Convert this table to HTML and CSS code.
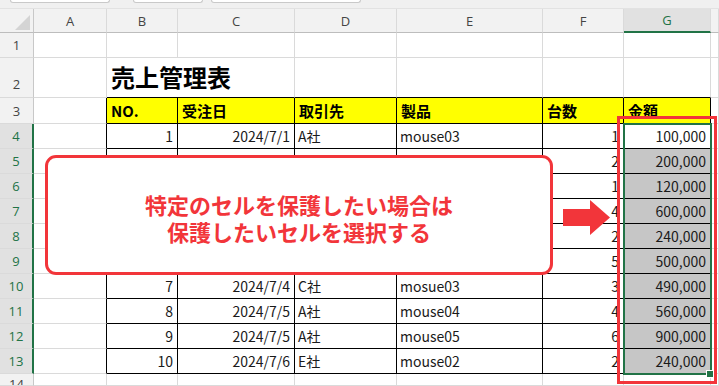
FILE: index.html
```html
<!DOCTYPE html>
<html lang="ja">
<head>
<meta charset="utf-8">
<title>売上管理表</title>
<link rel="stylesheet" href="styles.css">
</head>
<body>
<div class="sheet">
  <div class="strip"><span class="tb tb1"></span><span class="tb tb2"></span><span class="tb tb3"></span></div>
  <div class="row hdr">
    <div class="corner"><span class="tri"></span></div>
    <div class="ch">A</div><div class="ch">B</div><div class="ch">C</div><div class="ch">D</div><div class="ch">E</div><div class="ch">F</div><div class="ch sel">G</div><div class="ch"></div>
  </div>
  <div class="row">
    <div class="rh">1</div><div class="c"></div><div class="c"></div><div class="c"></div><div class="c"></div><div class="c"></div><div class="c"></div><div class="c"></div><div class="c"></div>
  </div>
  <div class="row r2">
    <div class="rh">2</div><div class="c"></div><div class="c tt title">売上管理表</div><div class="c tt"></div><div class="c tt"></div><div class="c tt"></div><div class="c tt"></div><div class="c tt"></div><div class="c"></div>
  </div>
  <div class="row r3">
    <div class="rh">3</div><div class="c tl"></div><div class="c t hd">NO.</div><div class="c t hd">受注日</div><div class="c t hd">取引先</div><div class="c t hd">製品</div><div class="c t hd">台数</div><div class="c t hd">金額</div><div class="c"></div>
  </div>
  <div class="row">
    <div class="rh sel">4</div><div class="c tl"></div><div class="c t num">1</div><div class="c t num">2024/7/1</div><div class="c t txt">A社</div><div class="c t txt">mouse03</div><div class="c t num">1</div><div class="c t num">100,000</div><div class="c"></div>
  </div>
  <div class="row">
    <div class="rh sel">5</div><div class="c tl"></div><div class="c t num">2</div><div class="c t num">2024/7/1</div><div class="c t txt">E社</div><div class="c t txt">mouse01</div><div class="c t num">2</div><div class="c t num s">200,000</div><div class="c"></div>
  </div>
  <div class="row">
    <div class="rh sel">6</div><div class="c tl"></div><div class="c t"></div><div class="c t"></div><div class="c t"></div><div class="c t"></div><div class="c t num">1</div><div class="c t num s">120,000</div><div class="c"></div>
  </div>
  <div class="row">
    <div class="rh sel">7</div><div class="c tl"></div><div class="c t"></div><div class="c t"></div><div class="c t"></div><div class="c t"></div><div class="c t num">4</div><div class="c t num s">600,000</div><div class="c"></div>
  </div>
  <div class="row">
    <div class="rh sel">8</div><div class="c tl"></div><div class="c t"></div><div class="c t"></div><div class="c t"></div><div class="c t"></div><div class="c t num">2</div><div class="c t num s">240,000</div><div class="c"></div>
  </div>
  <div class="row">
    <div class="rh sel">9</div><div class="c tl"></div><div class="c t"></div><div class="c t"></div><div class="c t"></div><div class="c t"></div><div class="c t num">5</div><div class="c t num s">500,000</div><div class="c"></div>
  </div>
  <div class="row">
    <div class="rh sel">10</div><div class="c tl"></div><div class="c t num">7</div><div class="c t num">2024/7/4</div><div class="c t txt">C社</div><div class="c t txt">mosue03</div><div class="c t num">3</div><div class="c t num s">490,000</div><div class="c"></div>
  </div>
  <div class="row">
    <div class="rh sel">11</div><div class="c tl"></div><div class="c t num">8</div><div class="c t num">2024/7/5</div><div class="c t txt">A社</div><div class="c t txt">mouse04</div><div class="c t num">4</div><div class="c t num s">560,000</div><div class="c"></div>
  </div>
  <div class="row">
    <div class="rh sel">12</div><div class="c tl"></div><div class="c t num">9</div><div class="c t num">2024/7/5</div><div class="c t txt">A社</div><div class="c t txt">mouse05</div><div class="c t num">6</div><div class="c t num s">900,000</div><div class="c"></div>
  </div>
  <div class="row">
    <div class="rh sel">13</div><div class="c tl"></div><div class="c t num">10</div><div class="c t num">2024/7/6</div><div class="c t txt">E社</div><div class="c t txt">mouse02</div><div class="c t num">2</div><div class="c t num s">240,000</div><div class="c"></div>
  </div>
  <div class="row r14">
    <div class="rh r14h">14</div><div class="c"></div><div class="c"></div><div class="c"></div><div class="c"></div><div class="c"></div><div class="c"></div><div class="c"></div><div class="c"></div>
  </div>

  <div class="selbox"></div>
  <div class="handle"></div>
  <div class="redbox"></div>
  <div class="callout">
    <p>特定のセルを保護したい場合は</p>
    <p>保護したいセルを選択する</p>
  </div>
  <svg class="arrow" width="48" height="36" viewBox="0 0 48 36"><polygon points="0,9 27,9 27,0 47,17.5 27,35 27,26 0,26" fill="#f2353a"/></svg>
</div>
</body>
</html>
```

FILE: styles.css
```css
* { box-sizing: border-box; }
html, body { margin: 0; padding: 0; background: #fff; }
body {
  font-family: "Noto Sans CJK JP", sans-serif;
  color: #1a1a1a;
  width: 719px;
  height: 386px;
  overflow: hidden;
}
.sheet { position: relative; width: 719px; height: 386px; overflow: hidden; }

.strip {
  height: 9px;
  background: #f0f0f0;
  display: flex;
  align-items: flex-start;
  padding-left: 10px;
  border-bottom: 1px solid #e2e2e2;
}
.tb {
  display: block;
  height: 3px;
  background: #fff;
  border: 1px solid #c9c9c9;
  border-top: none;
  border-radius: 0 0 3px 3px;
}
.tb1 { width: 100px; }
.tb2 { width: 70px; margin-left: 23px; }
.tb3 { width: 150px; margin-left: 8px; }

.row {
  display: grid;
  grid-template-columns: 34px 73px 71px 117px 102px 146px 81px 87px 8px;
  height: 25px;
}
.row.hdr { height: 24px; }
.row.r2 { height: 40px; }
.row.r3 { height: 26px; }
.row.r14 { height: 12px; }

.corner {
  position: relative;
  background: #f2f2f2;
  border-right: 1px solid #c8c8c8;
  border-bottom: 1px solid #bdbdbd;
}
.tri {
  position: absolute;
  right: 3px;
  bottom: 2px;
  width: 0;
  height: 0;
  border-left: 15px solid transparent;
  border-bottom: 15px solid #d4d4d4;
}
.ch {
  background: #f2f2f2;
  border-right: 1px solid #dadada;
  border-bottom: 1px solid #bdbdbd;
  display: flex;
  align-items: center;
  justify-content: center;
  font-family: "Open Sans", sans-serif;
  font-size: 13px;
  color: #444;
}
.ch.sel {
  background: #e1e1e1;
  color: #217346;
  border-bottom: 2px solid #217346;
}
.rh {
  background: #f2f2f2;
  border-right: 1px solid #c8c8c8;
  border-bottom: 1px solid #dadada;
  display: flex;
  align-items: center;
  justify-content: center;
  font-family: "Open Sans", sans-serif;
  font-size: 13px;
  color: #444;
}
.r2 .rh { align-items: flex-end; padding-bottom: 4px; }
.rh.r14h { align-items: flex-start; padding-top: 4px; line-height: 1; overflow: hidden; }
.rh.sel {
  background: #e1e1e1;
  color: #217346;
  border-right: 2px solid #217346;
}

.c {
  border-right: 1px solid #dadada;
  border-bottom: 1px solid #dadada;
  display: flex;
  align-items: center;
  font-size: 14px;
  line-height: 1;
  white-space: nowrap;
}
.t { border-right-color: #000; border-bottom-color: #000; }
.tl { border-right-color: #000; }
.tt { border-bottom-color: #000; }
.num { justify-content: flex-end; padding-right: 4px; }
.txt { padding-left: 3px; }
.hd {
  background: #ffff00;
  font-weight: bold;
  font-size: 15px;
  padding-left: 4px;
  color: #000;
}
.s { background: #c6c6c6; }
.title {
  font-size: 24px;
  font-weight: bold;
  align-items: flex-end;
  padding-left: 4px;
  padding-bottom: 8px;
  border-right: none;
  color: #000;
}

.selbox {
  position: absolute;
  left: 623px;
  top: 123px;
  width: 89px;
  height: 252px;
  border: 2px solid #217346;
}
.handle {
  position: absolute;
  left: 706px;
  top: 370px;
  width: 8px;
  height: 8px;
  background: #217346;
  border: 1px solid #fff;
}
.redbox {
  position: absolute;
  left: 617px;
  top: 116px;
  width: 100px;
  height: 268px;
  border: 3px solid #f2353a;
}
.callout {
  position: absolute;
  left: 45px;
  top: 155px;
  width: 508px;
  height: 120px;
  background: #fff;
  border: 3px solid #f2353a;
  border-radius: 11px;
  display: flex;
  flex-direction: column;
  align-items: center;
  justify-content: center;
  padding-top: 6px;
  color: #f2353a;
  font-weight: bold;
  font-size: 22px;
  line-height: 27px;
}
.callout p { margin: 0; }
.arrow {
  position: absolute;
  left: 563px;
  top: 200px;
}
```
